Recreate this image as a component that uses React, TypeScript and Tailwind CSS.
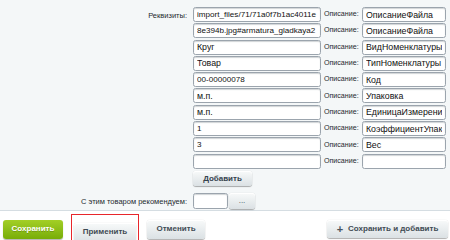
import React from 'react';

const rows: [string, string][] = [
  ['import_files/71/71a0f7b1ac4011e', 'ОписаниеФайла'],
  ['8e394b.jpg#armatura_gladkaya2', 'ОписаниеФайла'],
  ['Круг', 'ВидНоменклатуры'],
  ['Товар', 'ТипНоменклатуры'],
  ['00-00000078', 'Код'],
  ['м.п.', 'Упаковка'],
  ['м.п.', 'ЕдиницаИзмерения'],
  ['1', 'КоэффициентУпаковки'],
  ['3', 'Вес'],
  ['', ''],
];

// cyrillic values render a bit wider in the source font
const isCyr = (s: string) => /[а-яё]/i.test(s);

const inputCls =
  'h-[15px] rounded-[2.5px] border border-[#9ba4ad] bg-white px-[3px] text-[#111] outline-none shadow-[inset_0_1px_1px_rgba(150,160,165,0.45)]';

const btnCls =
  'rounded-[3px] bg-gradient-to-b from-[#f8fafa] to-[#dbe1e4] text-[8px] font-bold text-[#3f4b54] shadow-[0_0_1px_rgba(0,0,0,0.2),0_1px_1px_rgba(0,0,0,0.3),inset_0_1px_0_#fff]';

function App() {
  return (
    <div className="h-[240px] w-[450px] overflow-hidden bg-white font-['Liberation_Sans',Arial,sans-serif]">
      <div className="h-[211px] border-b border-[#d5dde2] bg-[#f4f7f8]">
        <div className="flex pt-[7px]">
          <div className="w-[187px] pt-[3px] text-right text-[7.5px] text-[#1e2a30]">Реквизиты:</div>
          <div className="ml-[6px] flex flex-col">
            <div className="flex flex-col gap-[1.3px]">
              {rows.map(([val, desc], i) => (
                <div key={i} className="flex items-center">
                  <input
                    readOnly
                    value={val}
                    className={`${inputCls} w-[128px] ${isCyr(val) ? 'text-[8.8px]' : 'text-[8.1px]'}`}
                  />
                  <span className="ml-[3px] w-[38px] text-[7.1px] text-[#1e2a30]">Описание:</span>
                  <input readOnly value={desc} className={`${inputCls} w-[84px] text-[8.8px]`} />
                </div>
              ))}
            </div>
            <button className={`${btnCls} mt-[2.5px] h-[15px] w-[59px] text-[7.8px] text-[#34424d]`}>Добавить</button>
          </div>
        </div>
        <div className="mt-[7px] flex items-center">
          <div className="w-[187px] text-right text-[7.5px] text-[#1e2a30]">С этим товаром рекомендуем:</div>
          <input readOnly value="" className={`${inputCls} ml-[6px] h-[16px] w-[35px] text-[8px]`} />
          <button className={`${btnCls} ml-[1px] h-[16px] w-[26px] font-normal`}>...</button>
        </div>
      </div>
      <div className="flex items-center pt-[3px]">
        <button className="ml-[3px] h-[19px] w-[60px] rounded-[3px] bg-gradient-to-b from-[#a3cf25] to-[#78ad07] text-[8px] font-bold text-white shadow-[0_1px_1px_rgba(0,0,0,0.3)] [text-shadow:0_1px_0_rgba(0,0,0,0.2)]">
          Сохранить
        </button>
        <div className="ml-[8px] border border-[#e8262b] p-[2px]">
          <button className={`${btnCls} h-[19px] w-[62px]`}>Применить</button>
        </div>
        <button className={`${btnCls} ml-[8px] h-[19px] w-[58px]`}>Отменить</button>
        <button className={`${btnCls} ml-auto mr-[2px] flex h-[18px] w-[121px] items-center justify-center gap-[5px]`}>
          <span className="text-[11px] leading-none text-[#4a555e]">+</span>
          Сохранить и добавить
        </button>
      </div>
    </div>
  );
}

export default App;
